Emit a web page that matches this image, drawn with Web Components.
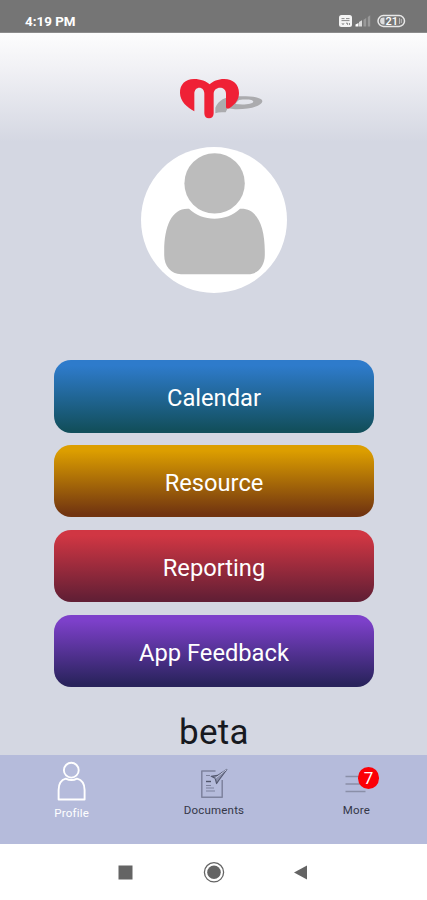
<!DOCTYPE html>
<html lang="en">
<head>
<meta charset="utf-8">
<meta name="viewport" content="width=device-width">
<title>Profile</title>
<style>
    body {
        margin: 0;
        font-family: Roboto, "Noto Sans", sans-serif;
    }
</style>
</head>
<body>

<phone-screen>
    <status-bar slot="status" time="4:19 PM" battery="21"></status-bar>
    <brand-logo></brand-logo>
    <user-avatar></user-avatar>
    <menu-list>
        <menu-button style="--from: #2e7bcb; --to: #124f5c">Calendar</menu-button>
        <menu-button style="--from: #dc9e00; --to: #713410">Resource</menu-button>
        <menu-button style="--from: #d03643; --to: #631f35">Reporting</menu-button>
        <menu-button style="--from: #7d40ca; --to: #29235c">App Feedback</menu-button>
    </menu-list>
    <release-tag>beta</release-tag>
    <tab-bar slot="tabs">
        <tab-item icon="profile" active>Profile</tab-item>
        <tab-item icon="documents">Documents</tab-item>
        <tab-item icon="more" badge="7">More</tab-item>
    </tab-bar>
    <system-nav slot="nav"></system-nav>
</phone-screen>

<script>

function define(name, markup, setup) {
    const template = document.createElement("template");
    template.innerHTML = markup;

    customElements.define(name, class extends HTMLElement {
        constructor() {
            super();
            this.attachShadow({mode: "open"});
            this.shadowRoot.appendChild(template.content.cloneNode(true));
        }

        connectedCallback() {
            if (setup) {
                setup(this, this.shadowRoot);
            }
        }
    });
}

define("phone-screen",
`<style>
    :host {
        display: flex;
        flex-direction: column;
        height: 900px;
        overflow: hidden;
        background: #fff;
    }

    main {
        flex: 1;
        min-height: 0;
        display: flex;
        flex-direction: column;
        align-items: center;
        background: linear-gradient(#fdfdfd, #f1f1f5 35px, #d4d7e2 109px);
    }
</style>
<slot name="status"></slot>
<main><slot></slot></main>
<slot name="tabs"></slot>
<slot name="nav"></slot>`);

define("status-bar",
`<style>
    :host {
        display: flex;
        justify-content: space-between;
        align-items: center;
        box-sizing: border-box;
        height: 33px;
        padding: 10px 21px 0 25px;
        background: #757575;
        border-bottom: 1px solid #8c8c8c;
        color: #fff;
    }

    .time {
        font-size: 13.4px;
        font-weight: 700;
    }

    svg {
        display: block;
    }

    .value {
        font-size: 11px;
        font-weight: 500;
    }
</style>
<span class="time"></span>
<svg width="68" height="14" viewBox="0 0 68 14">
    <rect x="1" y="1" width="13" height="12" rx="2.5" fill="#f4f4f4"/>
    <path d="M3.5 4.6h3M8 4.6h3.5M3.5 6.6h8M4 9.2l1 1.5 1-1.5M8 9.2h1.5v1.6M11.4 9v2" fill="none" stroke="#888" stroke-width="1"/>
    <path d="M17.5 12.5v-2l3-1.5v3.5z" fill="#fff"/>
    <path d="M21 12.5V8l3-1.8v6.3z" fill="#dcdcdc"/>
    <path d="M25.5 12.5V5.8l2.7-1.8v8.5zM29.8 12.5V3l2.4-1.8v11.3z" fill="#999"/>
    <rect x="40" y="1.6" width="26.5" height="10.8" rx="5.4" fill="#777" stroke="#e8e8e8" stroke-width="1.5"/>
    <path d="M45.5 3.6a3.4 3.4 0 0 0 0 6.8h1V3.6z" fill="#ddd"/>
    <path d="M61.5 4v6M63.3 5v4" stroke="#bbb" stroke-width="1"/>
    <text class="value" x="53.7" y="11" text-anchor="middle" fill="#fff"></text>
</svg>`,
(host, root) => {
    root.querySelector(".time").textContent = host.getAttribute("time");
    root.querySelector(".value").textContent = host.getAttribute("battery");
});

/* heart shaped "m" with the shadow it casts to the right */
define("brand-logo",
`<style>
    :host {
        display: block;
        width: 110px;
        height: 65px;
        margin: 32px 0 0 13px;
    }

    svg {
        display: block;
    }
</style>
<svg width="110" height="65" viewBox="0 0 330 195">
    <path fill-rule="evenodd" fill="#ababae" d="M151 145V128Q158 112 173 103Q188 94 220 94C264 93 292 98 292 109C290 124 252 134 210 133L188 130L182 142Q160 140 151 145zM211 117C239 120 263 117 265 110C264 104 247 102 222 105Q216 110 211 117z"/>
    <path fill="#ef2136" d="M88 139C67 128 45 109 45 84C44 59 61 42 87 42C108 42 124 49 134 58C144 49 158 42 178 42C204 42 222 58 222 84C222 103 212 117 194 129C188 133 183 130 183 125V86C183 62 146 62 146 87V145C146 154 141 160 132 160C123 160 118 154 118 145V86C118 62 88 62 88 86z"/>
</svg>`);

define("user-avatar",
`<style>
    :host {
        display: block;
        width: 146px;
        height: 146px;
        margin-top: 16.5px;
        border-radius: 50%;
        background: #fff;
    }

    svg {
        display: block;
    }
</style>
<svg width="146" height="146" viewBox="0 0 146 146" fill="#bcbcbc">
    <circle cx="73.6" cy="36.4" r="30.2"/>
    <path d="M48 61.8C31 60.6 23.2 79 23.2 104V108C23.2 119 30 127.2 40 127.2H107C117 127.2 123.8 119 123.8 108V104C123.8 79 116 60.6 99 61.8C86 75 61 75 48 61.8z"/>
</svg>`);

define("menu-list",
`<style>
    :host {
        display: flex;
        flex-direction: column;
        gap: 12.3px;
        width: 320px;
        margin-top: 67.5px;
    }
</style>
<slot></slot>`);

define("menu-button",
`<style>
    :host {
        display: block;
    }

    button {
        display: block;
        width: 100%;
        height: 72.6px;
        padding: 4px 0 0 1px;
        border: 0;
        border-radius: 17px;
        background: linear-gradient(var(--from) 8%, var(--to) 96%);
        color: #fff;
        font: 400 23.7px Roboto, sans-serif;
    }
</style>
<button><slot></slot></button>`);

define("release-tag",
`<style>
    :host {
        display: block;
        margin: 25px 0 0 1px;
        color: #17191f;
        font-size: 35px;
        line-height: 41px;
        letter-spacing: 0.3px;
    }
</style>
<slot></slot>`);

define("tab-bar",
`<style>
    :host {
        display: grid;
        grid-template-columns: repeat(3, 1fr);
        height: 89px;
        background: #b5bbdb;
    }
</style>
<slot></slot>`);

const icons = {
    profile:
`<g fill="none" stroke="#fff" stroke-width="1.9">
    <circle cx="20.3" cy="15.2" r="7.4"/>
    <path d="M14.8 23.6C9.5 25 7.6 29.5 7.6 35V44.5H33.6V35C33.6 29.5 31.5 25 26 23.6Q20.5 26.5 14.8 23.6z" stroke-linejoin="round"/>
</g>`,
    documents:
`<g fill="none" stroke="#7d829d" stroke-width="1.5">
    <path d="M22.5 16H8.8V42.3H29.2V25" stroke-linejoin="round"/>
    <path d="M13 20.5h4M13 30.5h5M13 33h8M13 36h9" stroke-width="1.1"/>
    <path d="M13 26.5h5" stroke="#50556a" stroke-width="1.4"/>
</g>
<path d="M33.8 14.5L26 25l-2.4 3.5-1.4-5.2-4-2 6.4-.9z" fill="#8c91ad" stroke="#545970" stroke-width="1.2" stroke-linejoin="round"/>
<path d="M33.5 14.7L22.4 23.2" stroke="#c4c9e3" stroke-width="1"/>`,
    more:
`<path d="M9.5 21.5h21M9.5 29h21M9.5 36.5h20" fill="none" stroke="#8a8fa8" stroke-width="1.4"/>`
};

define("tab-item",
`<style>
    :host {
        display: flex;
        flex-direction: column;
        align-items: center;
        color: #343748;
        font-size: 11.5px;
        letter-spacing: 0.2px;
    }

    :host([active]) {
        color: #fff;
    }

    .icon {
        position: relative;
        width: 40px;
        height: 48px;
    }

    svg {
        display: block;
    }

    .label {
        line-height: 14px;
        margin-left: 1px;
    }

    :host([active]) .label {
        margin-top: 3px;
    }

    .badge {
        position: absolute;
        left: 22px;
        top: 12px;
        width: 21.5px;
        height: 21.5px;
        border-radius: 50%;
        background: #fb0007;
        color: #fff;
        font-size: 17px;
        line-height: 22px;
        letter-spacing: 0;
        text-align: center;
    }

    .badge:empty {
        display: none;
    }
</style>
<div class="icon"><svg width="40" height="48" viewBox="0 0 40 48"></svg><span class="badge"></span></div>
<span class="label"><slot></slot></span>`,
(host, root) => {
    root.querySelector("svg").innerHTML = icons[host.getAttribute("icon")];
    root.querySelector(".badge").textContent = host.getAttribute("badge") || "";
});

define("system-nav",
`<style>
    :host {
        display: flex;
        justify-content: center;
        align-items: center;
        gap: 64px;
        height: 56px;
        background: #fff;
    }
</style>
<svg width="24" height="24" viewBox="0 0 24 24"><rect x="4.5" y="5.5" width="14" height="14" fill="#646464"/></svg>
<svg width="24" height="24" viewBox="0 0 24 24">
    <circle cx="12" cy="12.3" r="9.6" fill="none" stroke="#646464" stroke-width="1.3"/>
    <circle cx="12" cy="12.3" r="6.8" fill="#646464"/>
</svg>
<svg width="24" height="24" viewBox="0 0 24 24"><path d="M4 12.5L17 5.5v14z" fill="#646464"/></svg>`);

</script>
</body>
</html>
